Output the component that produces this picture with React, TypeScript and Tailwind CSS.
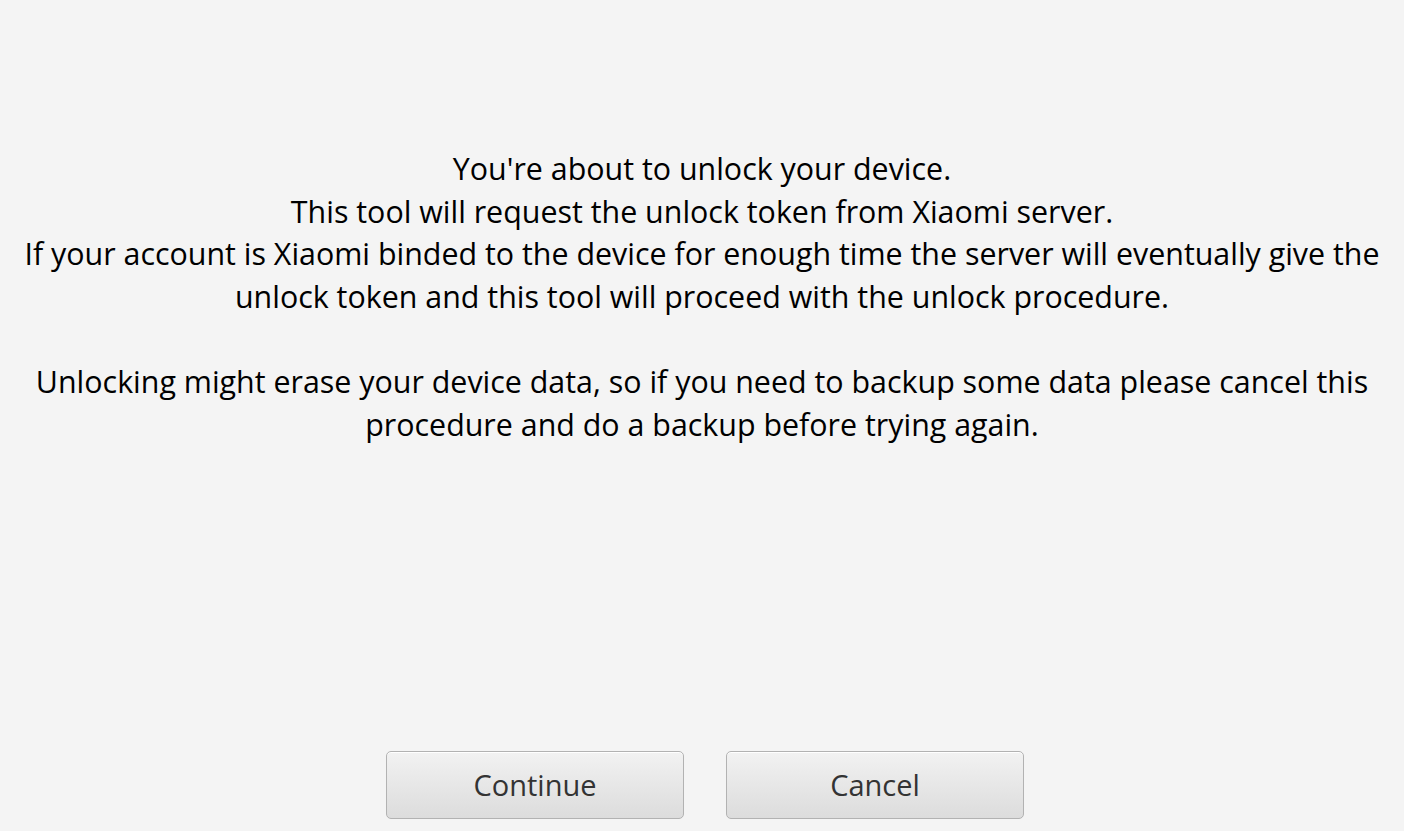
export default function App() {
  const lines = [
    "You're about to unlock your device.",
    'This tool will request the unlock token from Xiaomi server.',
    'If your account is Xiaomi binded to the device for enough time the server will eventually give the',
    'unlock token and this tool will proceed with the unlock procedure.',
    '',
    'Unlocking might erase your device data, so if you need to backup some data please cancel this',
    'procedure and do a backup before trying again.',
  ];

  return (
    <div className="w-[1404px] h-[831px] bg-[#f4f4f4] flex flex-col items-center font-['Open_Sans',sans-serif] overflow-hidden">
      <div className="pt-[148px] text-center text-black text-[30.4px] leading-[42.6px]">
        {lines.map((l, i) => (
          <div key={i} className="whitespace-pre">{l || ' '}</div>
        ))}
      </div>
      <div className="mt-auto mb-[12px] ml-[6px] flex gap-[42px]">
        {['Continue', 'Cancel'].map(label => (
          <button
            key={label}
            className="w-[298px] h-[68px] rounded-[5px] border border-[#b2b2b2] bg-gradient-to-b from-[#f2f2f2] to-[#dcdcdc] text-[#333333] text-[29px] shadow-[inset_0_1px_0_#ffffff]"
          >
            {label}
          </button>
        ))}
      </div>
    </div>
  );
}
